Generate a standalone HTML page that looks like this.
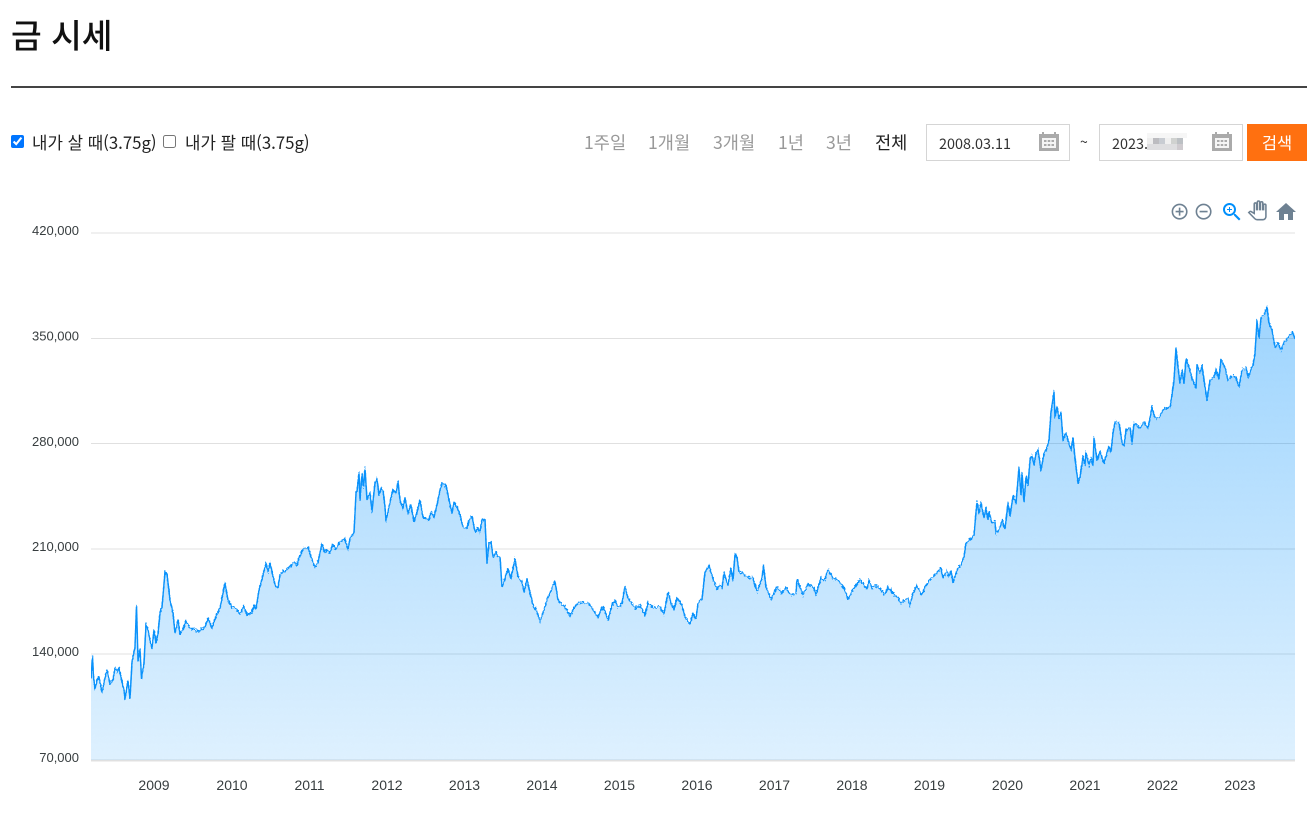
<!DOCTYPE html>
<html lang="ko"><head><meta charset="utf-8"><title>금 시세</title>
<style>
html,body{margin:0;padding:0;background:#fff;width:1313px;height:828px;overflow:hidden}
body{font-family:"Noto Sans CJK KR","Liberation Sans",sans-serif;color:#222;position:relative}
.a{position:absolute;white-space:nowrap}
h1{position:absolute;margin:0;left:11px;top:11px;font-size:33.4px;line-height:46px;font-weight:500;color:#111}
.rule{position:absolute;left:11px;top:86px;width:1296px;height:2px;background:#444}
.cb{position:absolute;margin:0;width:13px;height:13px;left:11px;top:135px}
.lb{font-size:16.8px;line-height:24px;top:130px;color:#222}
.f{font-size:17.6px;line-height:24px;top:131px;color:#999}
.box{position:absolute;top:124px;width:142px;height:35px;border:1px solid #d5d5d5;background:#fff}
.dt{font-size:14.4px;line-height:20px;top:134px;color:#333}
.btn{position:absolute;left:1247px;top:124px;width:60px;height:37px;background:#ff7010;color:#fff;font-size:16.5px;line-height:37px;text-align:center}
.px{position:absolute}
svg{position:absolute;overflow:visible}
</style></head><body>
<h1>금 시세</h1>
<div class="rule"></div>
<input class="cb" type="checkbox" checked>
<span class="a lb" style="left:32px">내가 살 때(3.75g)</span>
<input class="cb" type="checkbox" style="left:163px">
<span class="a lb" style="left:185px">내가 팔 때(3.75g)</span>
<span class="a f" style="left:584px">1주일</span>
<span class="a f" style="left:648px">1개월</span>
<span class="a f" style="left:713px">3개월</span>
<span class="a f" style="left:778px">1년</span>
<span class="a f" style="left:826px">3년</span>
<span class="a f" style="left:875px;color:#222">전체</span>
<div class="box" style="left:926px"></div>
<span class="a dt" style="left:939px">2008.03.11</span>
<svg style="left:1039px;top:132px" width="20" height="20" viewBox="0 0 20 20"><path fill="#aaa" d="M0 2h3V0h2v2h10V0h2v2h3v17H0z"/><rect x="3" y="6" width="14" height="10" fill="#f5f5f5"/><g fill="#aaa"><rect x="5" y="8" width="2.500" height="2"/><rect x="8.750" y="8" width="2.500" height="2"/><rect x="12.500" y="8" width="2.500" height="2"/><rect x="5" y="12" width="2.500" height="2"/><rect x="8.750" y="12" width="2.500" height="2"/><rect x="12.500" y="12" width="2.500" height="2"/></g></svg>
<span class="a" style="left:1080px;top:132px;font-size:14px;line-height:20px;color:#333">~</span>
<div class="box" style="left:1099px"></div>
<span class="a dt" style="left:1112px">2023.</span>
<div class="px" style="left:1147px;top:133px;width:40px;height:5px;background:#f6f6f6"></div>
<div class="px" style="left:1147px;top:138px;width:6px;height:6px;background:#eee"></div>
<div class="px" style="left:1153px;top:138px;width:6px;height:6px;background:#bcbcc0"></div>
<div class="px" style="left:1159px;top:138px;width:6px;height:6px;background:#c8ccd2"></div>
<div class="px" style="left:1165px;top:138px;width:6px;height:6px;background:#f0f0f0"></div>
<div class="px" style="left:1171px;top:138px;width:6px;height:6px;background:#d0d2d0"></div>
<div class="px" style="left:1177px;top:138px;width:6px;height:6px;background:#bcc0c4"></div>
<div class="px" style="left:1147px;top:144px;width:36px;height:6px;background:#dedee0"></div>
<div class="px" style="left:1177px;top:144px;width:6px;height:6px;background:#cfcbcf"></div>
<svg style="left:1212px;top:132px" width="20" height="20" viewBox="0 0 20 20"><path fill="#aaa" d="M0 2h3V0h2v2h10V0h2v2h3v17H0z"/><rect x="3" y="6" width="14" height="10" fill="#f5f5f5"/><g fill="#aaa"><rect x="5" y="8" width="2.500" height="2"/><rect x="8.750" y="8" width="2.500" height="2"/><rect x="12.500" y="8" width="2.500" height="2"/><rect x="5" y="12" width="2.500" height="2"/><rect x="8.750" y="12" width="2.500" height="2"/><rect x="12.500" y="12" width="2.500" height="2"/></g></svg>
<div class="btn">검색</div>

<svg style="left:1170px;top:201.7px" width="19.2" height="19.2" viewBox="0 0 24 24" fill="#6e8192"><path d="M13 7h-2v4H7v2h4v4h2v-4h4v-2h-4V7zm-1-5C6.48 2 2 6.48 2 12s4.48 10 10 10 10-4.48 10-10S17.52 2 12 2zm0 18c-4.41 0-8-3.59-8-8s3.59-8 8-8 8 3.59 8 8-3.59 8-8 8z"/></svg>
<svg style="left:1193.7px;top:201.7px" width="19.2" height="19.2" viewBox="0 0 24 24" fill="#6e8192"><path d="M7 11v2h10v-2H7zm5-9C6.48 2 2 6.48 2 12s4.48 10 10 10 10-4.48 10-10S17.52 2 12 2zm0 18c-4.41 0-8-3.59-8-8s3.59-8 8-8 8 3.59 8 8-3.59 8-8 8z"/></svg>
<svg style="left:1219.7px;top:200px" width="24" height="24" viewBox="0 0 24 24" fill="#008ffb"><path d="M15.5 14h-.79l-.28-.27C15.41 12.59 16 11.11 16 9.5 16 5.91 13.09 3 9.5 3S3 5.91 3 9.5 5.91 16 9.5 16c1.61 0 3.09-.59 4.23-1.57l.27.28v.79l5 4.99L20.49 19l-4.99-5zm-6 0C7.01 14 5 11.99 5 9.5S7.01 5 9.5 5 14 7.01 14 9.5 11.99 14 9.5 14z"/><path d="M12 10h-2v2H9v-2H7V9h2V7h1v2h2v1z"/></svg>
<svg style="left:1247.5px;top:201.3px" width="18.7" height="18.7" viewBox="0 0 24 24" fill="#fff" stroke="#6e8192" stroke-width="2"><path d="M23 5.500V20c0 2.200-1.800 4-4 4h-7.300c-1.080 0-2.100-.43-2.850-1.190L1 14.830s1.260-1.230 1.300-1.250c.22-.19.49-.29.79-.29.22 0 .42.060.6.160.04.010 4.310 2.460 4.310 2.460V4c0-.83.67-1.500 1.500-1.500S11 3.170 11 4v7h1V1.500c0-.83.67-1.500 1.500-1.500S15 .67 15 1.500V11h1V2.500c0-.83.67-1.500 1.500-1.500s1.500.67 1.500 1.500V11h1V5.500c0-.83.67-1.500 1.500-1.500s1.500.67 1.500 1.500z"/></svg>
<svg style="left:1274px;top:200px" width="24" height="24" viewBox="0 0 24 24" fill="#6e8192"><path d="M10 20v-6h4v6h5v-8h3L12 3 2 12h3v8z"/></svg>

<svg style="left:0;top:0" width="1313" height="828" viewBox="0 0 1313 828">
<defs>
<linearGradient id="g" gradientUnits="userSpaceOnUse" x1="0" y1="307" x2="0" y2="760">
<stop offset="0" stop-color="#008FFB" stop-opacity=".38"/>
<stop offset="1" stop-color="#008FFB" stop-opacity=".13"/>
</linearGradient>
<clipPath id="c"><rect x="91" y="290" width="1204" height="470"/></clipPath>
<filter id="j" filterUnits="userSpaceOnUse" x="60" y="280" width="1260" height="500" color-interpolation-filters="sRGB">
<feTurbulence type="fractalNoise" baseFrequency="0.45 0.45" numOctaves="2" seed="7" result="n"/>
<feColorMatrix in="n" type="matrix" values="0 0 0 0 .5  0 1 0 0 0  0 0 0 0 0  0 0 0 0 1" result="m"/>
<feDisplacementMap in="SourceGraphic" in2="m" scale="7" xChannelSelector="R" yChannelSelector="G"/>
<feGaussianBlur stdDeviation="0.3"/>
</filter>
</defs>
<g stroke="#e0e0e0" stroke-width="1">
<line x1="91" x2="1295" y1="233" y2="233"/>
<line x1="91" x2="1295" y1="338.500" y2="338.500"/>
<line x1="91" x2="1295" y1="443.500" y2="443.500"/>
<line x1="91" x2="1295" y1="549" y2="549"/>
<line x1="91" x2="1295" y1="654" y2="654"/>
<line x1="91" x2="1295" y1="760.500" y2="760.500" stroke-width="2"/>
</g>
<g clip-path="url(#c)"><g filter="url(#j)">
<path fill="url(#g)" d="M85 775V678H91L92.500 657 93.500 677 95 689 97 680 99 677 102 692 105 678 107 670 110 684 113 680 115 668 117 672 119 668 122 682 124 690 125 699 128 681 130 698 132 662 135 647 136.500 606 138 660 140 650 141.500 678 144 663 146 624 148 630 150 640 152 648 154 630 156 643 158 634 160 613 162 607 165 572 167 574 170 600 173 613 175 633 178 620 180 634 183 630 186 621 190 628 195 629 198 632 205 627 208 618 212 628 216 616 220 608 225 583 228 600 232 607 236 609 240 614 244 606 247 615 252 612 254 606 256 609 259 590 263 575 266 563 268 572 270 563 273 576 276 588 278 587 280 575 284 571 290 567 294 562 297 565 300 555 304 548 308 547 311 557 315 567 318 562 322 544 325 553 327 550 330 553 333 544 336 549 340 542 345 539 348 550 350 538 354 533 356 493 357 491 359 473 360 499 362 475 363.500 487 365 468 367 500 370 493 372 511 375 483 377 479 379 495 381 488 383 490 385 507 386 521 390 502 393 490 396 493 398 482 400 500 403 508 405 498 408 513 411 505 414 522 417 512 420 500 423 517 429 520 431 512 434 517 437 505 440 490 442 484 446 485 450 505 452 513 454 503 457 507 460 515 463 527 467 528 470 518 472 516 475 532 478 528 480 532 482 519 485 520 487 563 489 543 491 542 493 557 496 552 498 557 500 557 502 587 505 578 508 569 511 578 515 559 518 577 522 582 524 592 527 579 530 593 533 605 537 612 540 621 544 610 547 600 552 588 555 581 558 600 562 604 566 608 570 616 574 608 578 603 584 602 590 605 595 613 598 617 603 606 608 620 612 605 615 600 618 608 622 603 625 587 628 598 635 608 640 605 645 615 648 603 653 607 660 607 664 614 668 592 671 603 674 609 677 598 682 605 685 617 690 624 693 613 696 619 698 603 702 599 705 572 709 566 714 582 717 589 719 585 722 588 724 573 728 585 731 568 733 580 735 554 737 557 739 572 745 575 750 578 753 578 757 592 762 578 763.500 566 766 587 771 599 777 587 782 593 786 587 790 595 796 593 797 579 803 595 808 584 814 588 816 595 821 578 825 580 828 569 833 578 838 580 844 588 848 599 854 588 860 580 867 589 869 580 872 588 875 585 880 589 885 595 888 587 892 592 898 598 901 603 908 598 910 605 913 593 917 586 922 595 925 587 930 580 937 573 941 568 943 578 947 571 949 577 951 571 953 582 958 568 961 565 964 557 966 543 970 540 974 535 976 512 977 502 979 513 981 503 984 518 986 508 988 520 989 512 992 523 995 522 996 533 1000 528 1002 520 1005 529 1008 503 1010 516 1013 496 1016 503 1019 468 1021 495 1022 473 1024 502 1026 477 1028 485 1030 460 1032 455 1034 465 1036 453 1038 450 1041 470 1044 453 1047 448 1049 440 1051 412 1054 392 1055 417 1057 407 1059 418 1061 413 1063 440 1066 433 1071 450 1073 438 1075 458 1078 483 1080 477 1083 457 1085 465 1086 452 1089 465 1091 458 1093 465 1094 438 1097 460 1100 452 1104 463 1107 453 1109 446 1111 452 1113 433 1115 422 1119 423 1122 442 1124 446 1126 430 1130 427 1132 443 1134 423 1137 425 1140 428 1144 422 1148 428 1150 418 1152 407 1155 418 1159 418 1163 410 1167 408 1170 408 1172 395 1174 380 1176 348 1178 367 1180 383 1182 370 1184 383 1186 359 1189 367 1192 378 1196 388 1197 365 1200 373 1202 366 1205 387 1207 400 1210 380 1214 377 1216 370 1219 378 1221 359 1225 368 1228 380 1232 376 1236 377 1239 387 1242 370 1246 368 1248 377 1253 365 1255 353 1257 321 1259 338 1261 318 1264 315 1267 307 1269 323 1272 330 1275 347 1278 343 1281 350 1284 342 1288 338 1292 332 1295 338H1302V775Z"/>
<path fill="none" stroke="#0a92fb" stroke-width="1.500" stroke-linejoin="round" d="M85 678H91L92.500 657 93.500 677 95 689 97 680 99 677 102 692 105 678 107 670 110 684 113 680 115 668 117 672 119 668 122 682 124 690 125 699 128 681 130 698 132 662 135 647 136.500 606 138 660 140 650 141.500 678 144 663 146 624 148 630 150 640 152 648 154 630 156 643 158 634 160 613 162 607 165 572 167 574 170 600 173 613 175 633 178 620 180 634 183 630 186 621 190 628 195 629 198 632 205 627 208 618 212 628 216 616 220 608 225 583 228 600 232 607 236 609 240 614 244 606 247 615 252 612 254 606 256 609 259 590 263 575 266 563 268 572 270 563 273 576 276 588 278 587 280 575 284 571 290 567 294 562 297 565 300 555 304 548 308 547 311 557 315 567 318 562 322 544 325 553 327 550 330 553 333 544 336 549 340 542 345 539 348 550 350 538 354 533 356 493 357 491 359 473 360 499 362 475 363.500 487 365 468 367 500 370 493 372 511 375 483 377 479 379 495 381 488 383 490 385 507 386 521 390 502 393 490 396 493 398 482 400 500 403 508 405 498 408 513 411 505 414 522 417 512 420 500 423 517 429 520 431 512 434 517 437 505 440 490 442 484 446 485 450 505 452 513 454 503 457 507 460 515 463 527 467 528 470 518 472 516 475 532 478 528 480 532 482 519 485 520 487 563 489 543 491 542 493 557 496 552 498 557 500 557 502 587 505 578 508 569 511 578 515 559 518 577 522 582 524 592 527 579 530 593 533 605 537 612 540 621 544 610 547 600 552 588 555 581 558 600 562 604 566 608 570 616 574 608 578 603 584 602 590 605 595 613 598 617 603 606 608 620 612 605 615 600 618 608 622 603 625 587 628 598 635 608 640 605 645 615 648 603 653 607 660 607 664 614 668 592 671 603 674 609 677 598 682 605 685 617 690 624 693 613 696 619 698 603 702 599 705 572 709 566 714 582 717 589 719 585 722 588 724 573 728 585 731 568 733 580 735 554 737 557 739 572 745 575 750 578 753 578 757 592 762 578 763.500 566 766 587 771 599 777 587 782 593 786 587 790 595 796 593 797 579 803 595 808 584 814 588 816 595 821 578 825 580 828 569 833 578 838 580 844 588 848 599 854 588 860 580 867 589 869 580 872 588 875 585 880 589 885 595 888 587 892 592 898 598 901 603 908 598 910 605 913 593 917 586 922 595 925 587 930 580 937 573 941 568 943 578 947 571 949 577 951 571 953 582 958 568 961 565 964 557 966 543 970 540 974 535 976 512 977 502 979 513 981 503 984 518 986 508 988 520 989 512 992 523 995 522 996 533 1000 528 1002 520 1005 529 1008 503 1010 516 1013 496 1016 503 1019 468 1021 495 1022 473 1024 502 1026 477 1028 485 1030 460 1032 455 1034 465 1036 453 1038 450 1041 470 1044 453 1047 448 1049 440 1051 412 1054 392 1055 417 1057 407 1059 418 1061 413 1063 440 1066 433 1071 450 1073 438 1075 458 1078 483 1080 477 1083 457 1085 465 1086 452 1089 465 1091 458 1093 465 1094 438 1097 460 1100 452 1104 463 1107 453 1109 446 1111 452 1113 433 1115 422 1119 423 1122 442 1124 446 1126 430 1130 427 1132 443 1134 423 1137 425 1140 428 1144 422 1148 428 1150 418 1152 407 1155 418 1159 418 1163 410 1167 408 1170 408 1172 395 1174 380 1176 348 1178 367 1180 383 1182 370 1184 383 1186 359 1189 367 1192 378 1196 388 1197 365 1200 373 1202 366 1205 387 1207 400 1210 380 1214 377 1216 370 1219 378 1221 359 1225 368 1228 380 1232 376 1236 377 1239 387 1242 370 1246 368 1248 377 1253 365 1255 353 1257 321 1259 338 1261 318 1264 315 1267 307 1269 323 1272 330 1275 347 1278 343 1281 350 1284 342 1288 338 1292 332 1295 338H1302"/>
</g></g>
<g font-family="'Liberation Sans',Arial,sans-serif" font-size="13" fill="#373d3f" text-anchor="end">
<text x="79" y="235">420,000</text>
<text x="79" y="340.500">350,000</text>
<text x="79" y="446">280,000</text>
<text x="79" y="551">210,000</text>
<text x="79" y="656">140,000</text>
<text x="79" y="762">70,000</text>
</g>
<g font-family="'Liberation Sans',Arial,sans-serif" font-size="14" fill="#373d3f" text-anchor="middle">
<text x="154" y="790">2009</text><text x="232" y="790">2010</text><text x="309.500" y="790">2011</text><text x="387" y="790">2012</text><text x="464.500" y="790">2013</text><text x="542" y="790">2014</text><text x="619.500" y="790">2015</text><text x="697" y="790">2016</text><text x="774.500" y="790">2017</text><text x="852" y="790">2018</text><text x="929.500" y="790">2019</text><text x="1007.500" y="790">2020</text><text x="1085" y="790">2021</text><text x="1162.500" y="790">2022</text><text x="1240" y="790">2023</text>
</g>
</svg>
</body></html>
